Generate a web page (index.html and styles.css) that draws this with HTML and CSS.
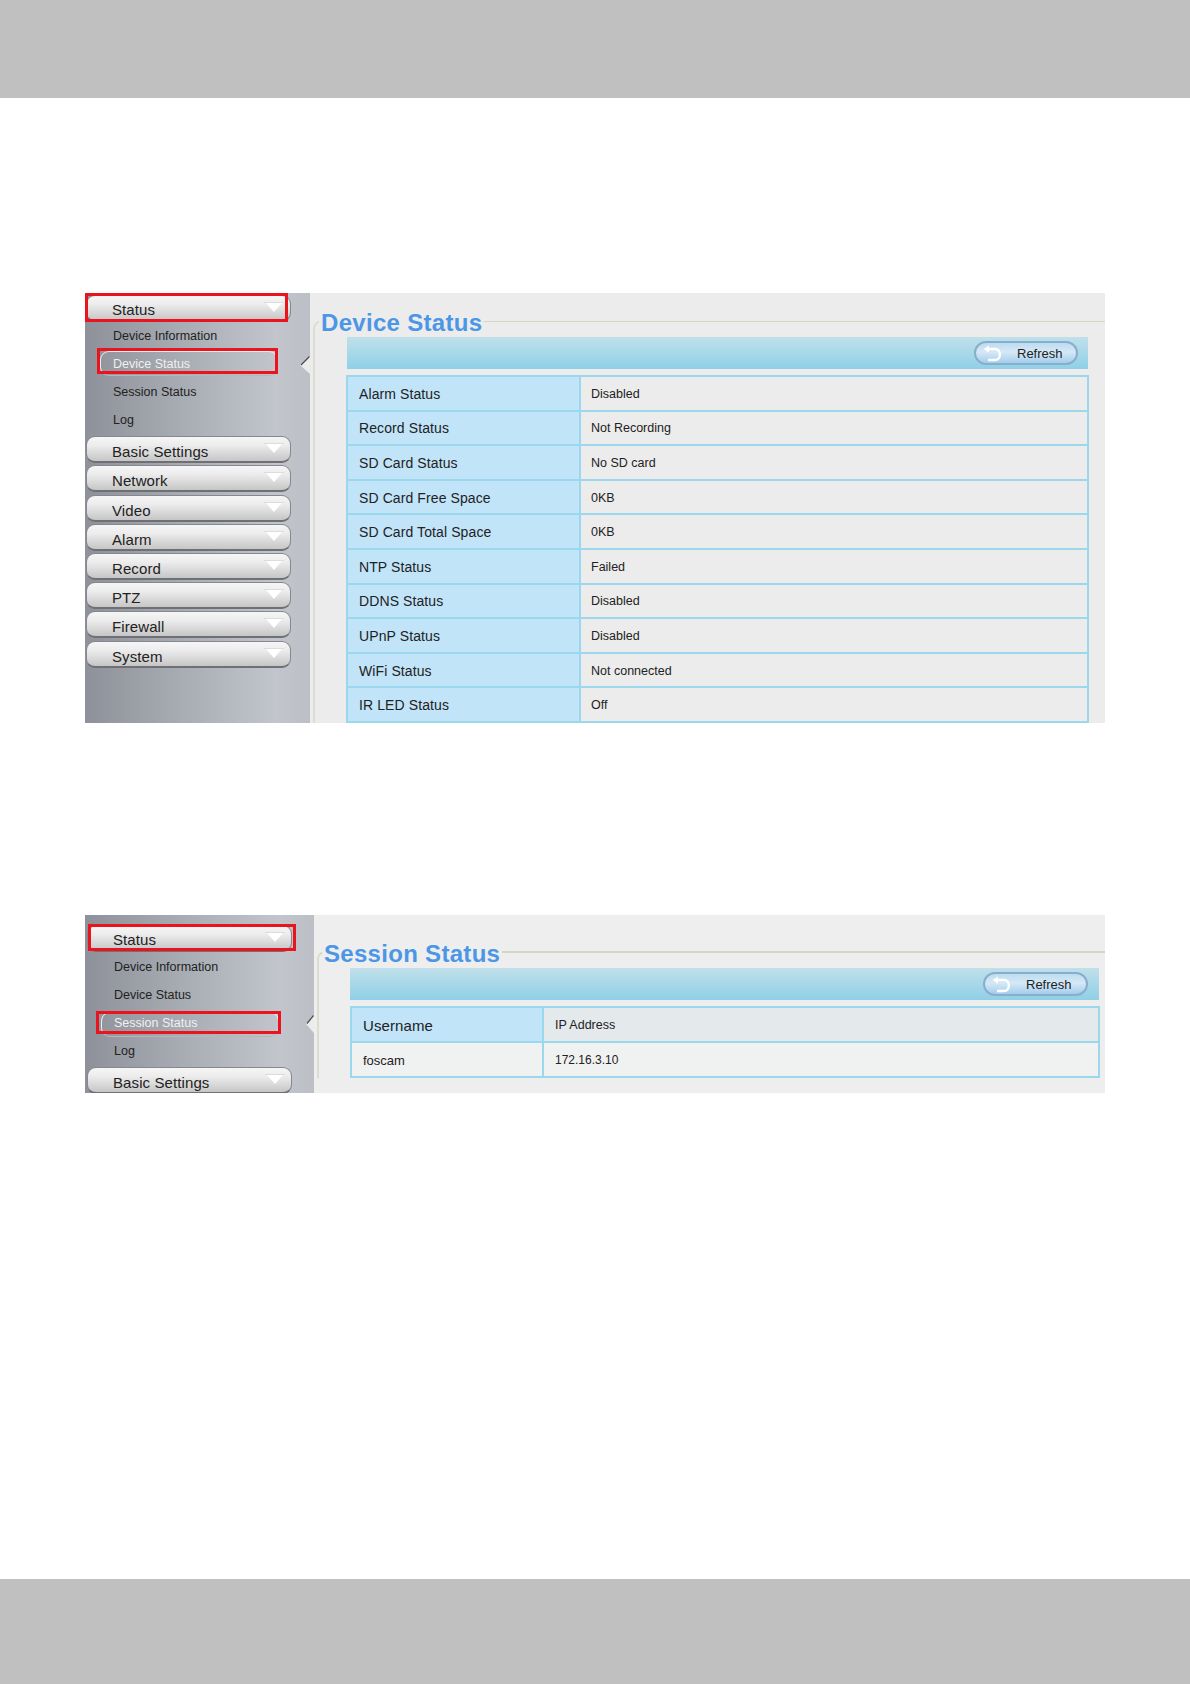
FILE: index.html
```html
<!DOCTYPE html>
<html lang="en">
  <head>
    <meta charset="UTF-8" />
    <meta name="viewport" content="width=device-width, initial-scale=1.0" />
    <title>Status</title>
    <link rel="stylesheet" href="styles.css">
  </head>
  <body>
    <div class="band band_top"></div>

    <section class="shot shot_device">
      <aside class="side">
        <a class="menu_btn">Status<i></i></a>
        <ul class="sub_menu">
          <li>Device Information</li>
          <li class="on">Device Status</li>
          <li>Session Status</li>
          <li>Log</li>
        </ul>
        <a class="menu_btn">Basic Settings<i></i></a>
        <a class="menu_btn">Network<i></i></a>
        <a class="menu_btn">Video<i></i></a>
        <a class="menu_btn">Alarm<i></i></a>
        <a class="menu_btn">Record<i></i></a>
        <a class="menu_btn">PTZ<i></i></a>
        <a class="menu_btn">Firewall<i></i></a>
        <a class="menu_btn">System<i></i></a>
        <svg class="notch" width="10" height="18" viewBox="0 0 10 18">
          <path d="M10 0 L0 9 L10 18 Z" fill="#ececec" />
          <path d="M9.5 0.5 L1 9" fill="none" stroke="#4a4a4a" stroke-width="1.2" />
        </svg>
        <span class="red_box red_status"></span>
        <span class="red_box red_sub"></span>
      </aside>
      <div class="content">
        <fieldset class="group">
          <legend>Device Status</legend>
          <div class="toolbar">
            <a class="refresh">
              <svg width="20" height="17" viewBox="0 0 20 17">
                <path d="M5 4 H12 C18.5 4 18.5 15 12 15 H5" fill="none" stroke="#fff" stroke-width="2.4" />
                <path d="M0.5 4 L6 0.5 V7.5 Z" fill="#fff" />
              </svg>
              Refresh
            </a>
          </div>
          <table class="info">
            <tr><th>Alarm Status</th><td>Disabled</td></tr>
            <tr><th>Record Status</th><td>Not Recording</td></tr>
            <tr><th>SD Card Status</th><td>No SD card</td></tr>
            <tr><th>SD Card Free Space</th><td>0KB</td></tr>
            <tr><th>SD Card Total Space</th><td>0KB</td></tr>
            <tr><th>NTP Status</th><td>Failed</td></tr>
            <tr><th>DDNS Status</th><td>Disabled</td></tr>
            <tr><th>UPnP Status</th><td>Disabled</td></tr>
            <tr><th>WiFi Status</th><td>Not connected</td></tr>
            <tr><th>IR LED Status</th><td>Off</td></tr>
          </table>
        </fieldset>
      </div>
    </section>

    <section class="shot shot_session">
      <aside class="side">
        <a class="menu_btn">Status<i></i></a>
        <ul class="sub_menu">
          <li>Device Information</li>
          <li>Device Status</li>
          <li class="on">Session Status</li>
          <li>Log</li>
        </ul>
        <a class="menu_btn">Basic Settings<i></i></a>
        <svg class="notch" width="8" height="18" viewBox="0 0 8 18">
          <path d="M8 0 L0 9 L8 18 Z" fill="#ececec" />
          <path d="M7.5 0.5 L1 8.5" fill="none" stroke="#4a4a4a" stroke-width="1.2" />
        </svg>
        <span class="red_box red_status"></span>
        <span class="red_box red_sub"></span>
      </aside>
      <div class="content">
        <fieldset class="group">
          <legend>Session Status</legend>
          <div class="toolbar">
            <a class="refresh">
              <svg width="20" height="17" viewBox="0 0 20 17">
                <path d="M5 4 H12 C18.5 4 18.5 15 12 15 H5" fill="none" stroke="#fff" stroke-width="2.4" />
                <path d="M0.5 4 L6 0.5 V7.5 Z" fill="#fff" />
              </svg>
              Refresh
            </a>
          </div>
          <table class="info">
            <tr class="head"><th>Username</th><td>IP Address</td></tr>
            <tr><td class="name">foscam</td><td>172.16.3.10</td></tr>
          </table>
        </fieldset>
      </div>
    </section>

    <div class="band band_bottom"></div>
  </body>
</html>
```

FILE: styles.css
```css
* {
  margin: 0;
  padding: 0;
  box-sizing: border-box;
}
body {
  display: flex;
  flex-direction: column;
  min-height: 100vh;
  background-color: #fff;
  color: #222;
  font-family: "Liberation Sans", Arial, sans-serif;
}
.band {
  background-color: #c0c0c0;
}
.band_top {
  height: 98px;
}
.band_bottom {
  height: 105px;
  margin-top: auto;
}

/* screenshots */
.shot {
  display: flex;
  width: 1020px;
  margin-left: 85px;
  overflow: hidden;
  background-color: #ececec;
}
.shot_device {
  height: 430px;
  margin-top: 195px;
}
.shot_session {
  height: 178px;
  margin-top: 192px;
  background-color: #eee;
}

/* left menu */
.side {
  position: relative;
  flex: none;
  width: 225px;
  padding: 2px 0 0 1px;
  background: linear-gradient(90deg, #8e9199 0%, #a9adb4 45%, #c2c6cc 85%, #bcc0c6 100%);
}
.shot_session .side {
  width: 229px;
  padding: 10px 0 0 2px;
}
.menu_btn {
  position: relative;
  display: block;
  width: 205px;
  height: 27px;
  margin-bottom: 2.2px;
  padding-left: 25px;
  border: 1px solid #85888c;
  border-bottom: 2px solid #6e7074;
  border-radius: 9px;
  background: linear-gradient(#f6f6f6, #ececec 35%, #c6c6c6);
  font-size: 15px;
  line-height: 30px;
  letter-spacing: 0.1px;
}
.menu_btn:first-child {
  line-height: 27px;
}
.menu_btn i {
  position: absolute;
  top: 7px;
  right: 8px;
  width: 0;
  height: 0;
  border-top: 9px solid #fff;
  border-right: 8px solid transparent;
  border-left: 8px solid transparent;
}
.menu_btn i::before {
  content: "";
  position: absolute;
  top: -10px;
  left: -10px;
  width: 20px;
  height: 1px;
  background-color: #dcdcdc;
}
.sub_menu {
  margin: -2px 0 2px;
  list-style: none;
}
.shot_session .sub_menu {
  margin-top: -1px;
}
.sub_menu li {
  position: relative;
  height: 28px;
  padding-left: 27px;
  font-size: 12.5px;
  line-height: 28px;
}
.shot_session .sub_menu li {
  line-height: 29px;
}
.sub_menu li.on {
  color: #f0f0f0;
}
.sub_menu li.on::before {
  content: "";
  position: absolute;
  top: 1px;
  left: 14px;
  width: 176px;
  height: 23px;
  border: 1px solid #eceef0;
  border-bottom-color: #b4b7bc;
  border-radius: 9px;
}
.shot_session .sub_menu li.on::before {
  top: 3px;
}
.notch {
  position: absolute;
  right: 0;
  top: 63px;
}
.shot_session .notch {
  top: 100px;
}
.red_box {
  position: absolute;
  border: 3px solid #e9141d;
}
.shot_device .red_status {
  top: 0;
  left: 0;
  width: 203px;
  height: 29px;
}
.shot_device .red_sub {
  top: 55px;
  left: 12px;
  width: 181px;
  height: 26px;
}
.shot_session .red_status {
  top: 9px;
  left: 3px;
  width: 208px;
  height: 27px;
}
.shot_session .red_sub {
  top: 96px;
  left: 11px;
  width: 185px;
  height: 23px;
}

/* right side */
.content {
  flex: 1;
  min-width: 0;
  padding-top: 14px;
}
.shot_session .content {
  padding-top: 23px;
}
.group {
  min-width: 0;
  margin-left: 3px;
  padding: 2px 17px 0 32px;
  border: 0;
  border-top: 1px solid #d6d6c6;
  border-left: 2px solid #dcdccf;
  border-top-left-radius: 8px;
}
.shot_session .group {
  padding: 2px 6px 0 31px;
  border-top-width: 2px;
}
.group legend {
  margin-left: -28px;
  padding: 4px 2px 0;
  color: #4b96e6;
  font-size: 24px;
  font-weight: bold;
  line-height: 24px;
  letter-spacing: 0.3px;
}
.toolbar {
  display: flex;
  justify-content: flex-end;
  align-items: center;
  height: 32px;
  padding-right: 10px;
  background: linear-gradient(#c0e0ea, #8fd0e7);
}
.refresh {
  display: flex;
  align-items: center;
  width: 104px;
  height: 24px;
  padding-left: 7px;
  border: 2px solid #88aecb;
  border-radius: 12px;
  background: linear-gradient(#bcdcf2, #d6e8f6 45%, #a3cdee);
  font-size: 13px;
  gap: 14px;
}
.shot_session .refresh {
  width: 105px;
}
.shot_session .toolbar {
  padding-right: 11px;
}
.info {
  width: calc(100% + 2px);
  margin: 6px -1px 0;
  border-collapse: collapse;
  table-layout: fixed;
}
.shot_session .info {
  width: calc(100% + 1px);
  margin-left: 0;
}
.info th,
.info td {
  height: 34.6px;
  padding: 1px 0 0 10px;
  border: 2px solid #9bd8ee;
  text-align: left;
  font-weight: normal;
}
.info th {
  width: 233px;
  padding-left: 11px;
  background-color: #c1e4f9;
  font-size: 14px;
  letter-spacing: 0.1px;
}
.info td {
  font-size: 12.5px;
}
.shot_session .info th,
.shot_session .info td {
  height: 35px;
  padding-left: 11px;
}
.shot_session .info th {
  width: 192px;
  padding-left: 11px;
  font-size: 15px;
}
.shot_session .info td {
  background-color: #f0f1f1;
  font-size: 12px;
}
.shot_session .info .head td {
  background-color: #e4e9ec;
  font-size: 12.5px;
}
.shot_session .info .name {
  font-size: 13px;
}
```
